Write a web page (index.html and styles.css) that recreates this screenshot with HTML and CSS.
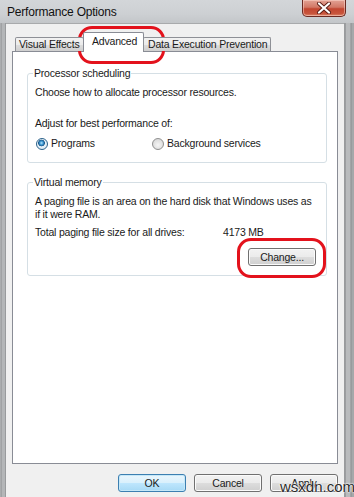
FILE: index.html
```html
<!DOCTYPE html>
<html>
<head>
<meta charset="utf-8">
<link rel="stylesheet" href="styles.css">
</head>
<body>
<div class="window">
  <div class="titlebar">
    <span class="title">Performance Options</span>
    <div class="close">
      <svg width="16" height="12" viewBox="0 0 16 12"><path d="M3 1.5 L13 10.5 M13 1.5 L3 10.5" stroke="#5a1c14" stroke-width="4" stroke-linecap="round"/><path d="M3 1.5 L13 10.5 M13 1.5 L3 10.5" stroke="#ffffff" stroke-width="2.2" stroke-linecap="round"/></svg>
    </div>
  </div>
  <div class="client">
    <div class="tabs">
      <div class="tab tab-ve">Visual Effects</div>
      <div class="tab tab-sel">Advanced</div>
      <div class="tab tab-dep">Data Execution Prevention</div>
    </div>
    <div class="panel">
      <div class="group group-cpu">
        <div class="group-title">Processor scheduling</div>
        <div class="line l-choose">Choose how to allocate processor resources.</div>
        <div class="line l-adjust">Adjust for best performance of:</div>
        <div class="radios">
          <div class="radio-item ri-first"><span class="radio on"></span>Programs</div>
          <div class="radio-item"><span class="radio"></span>Background services</div>
        </div>
      </div>
      <div class="group group-vm">
        <div class="group-title">Virtual memory</div>
        <div class="line l-paging">A paging file is an area on the hard disk that Windows uses as<br>if it were RAM.</div>
        <div class="line l-total"><span class="total-label">Total paging file size for all drives:</span><span>4173 MB</span></div>
        <div class="change-row"><div class="btn btn-change">Change...</div></div>
      </div>
    </div>
    <div class="buttons">
      <div class="btn btn-default">OK</div>
      <div class="btn">Cancel</div>
      <div class="btn">Apply</div>
    </div>
  </div>
  <div class="mark mark-adv"></div>
  <div class="mark mark-change"></div>
  <div class="watermark">wsxdn.com</div>
</div>
</body>
</html>
```

FILE: styles.css
```css
* { box-sizing: border-box; }
html, body { margin: 0; padding: 0; }
body {
  width: 354px;
  height: 497px;
  overflow: hidden;
  font-family: "Liberation Sans", Arial, sans-serif;
  font-size: 10.5px;
  letter-spacing: -0.2px;
  color: #1a1a1a;
}
.window {
  position: relative;
  width: 354px;
  height: 497px;
  display: flex;
  flex-direction: column;
  background: linear-gradient(90deg, #c9cbcd 0px, #8c8e90 1px, #b4b6b8 2px, #b4b6b8 5px, #7d7f81 6px, #b4b6b8 7px, #b4b6b8 344px, #7e8082 345px, #b9bbbd 346px, #b9bbbd 350px, #8c8e90 351px, #a6a8aa 352px);
}
.titlebar {
  height: 23px;
  flex: none;
  display: flex;
  align-items: flex-start;
  justify-content: space-between;
  background: linear-gradient(180deg, #d3d6d9 0%, #cdd0d3 60%, #c3c6c9 100%);
  padding: 0 8px 0 7px;
}
.title {
  font-size: 12px;
  line-height: 14px;
  margin-top: 5px;
  color: #111;
  letter-spacing: -0.2px;
}
.close {
  width: 44px;
  height: 17px;
  border: 1px solid #6b2a22;
  border-top: none;
  border-radius: 0 0 5px 5px;
  background: linear-gradient(180deg, #e3a395 0%, #d27866 45%, #c24630 55%, #c8553c 85%, #dc8a6e 100%);
  box-shadow: inset 0 0 0 1px rgba(255,220,210,0.5);
  display: flex;
  align-items: center;
  justify-content: center;
}
.client {
  flex: 1;
  margin: 0 10px 0 6px;
  background: #f0f0f0;
  border-top: 1px solid #a8aaac;
  padding: 8px 6px 0 6px;
  display: flex;
  flex-direction: column;
}
.tabs {
  display: flex;
  align-items: flex-end;
  padding-left: 3px;
  height: 19px;
  position: relative;
  z-index: 1;
}
.tab {
  height: 14px;
  line-height: 12px;
  border: 1px solid #8e9096;
  border-bottom: none;
  border-radius: 2px 2px 0 0;
  background: linear-gradient(180deg, #f2f2f2 0%, #ebebeb 50%, #dddddd 51%, #cfcfcf 100%);
  white-space: nowrap;
  overflow: hidden;
  color: #1a1a1a;
}
.tab-ve { width: 69px; padding-left: 3px; }
.tab-sel {
  width: 61px;
  height: 20px;
  margin-left: -1px;
  margin-bottom: -1px;
  line-height: 17px;
  background: #ffffff;
  padding-left: 8px;
  border-color: #898c95;
}
.tab-dep { width: 128px; margin-left: -1px; padding-left: 4px; }
.panel {
  height: 413px;
  background: #ffffff;
  border: 1px solid #898c95;
  padding: 21px 10px 0 14px;
  flex: none;
}
.group {
  border: 1px solid #d5dfe5;
  border-radius: 3px;
  padding: 0 10px 12px 7px;
}
.group-vm { margin-top: 19px; padding-bottom: 9px; }
.group-title {
  width: fit-content;
  margin: -7px 0 0 -2px;
  padding: 0 1px;
  background: #fff;
  line-height: 13px;
}
.line { line-height: 13px; white-space: nowrap; }
.l-choose { margin-top: 6px; }
.l-adjust { margin-top: 18px; }
.radios { display: flex; margin-top: 7px; line-height: 13px; }
.radio-item { display: flex; align-items: center; }
.ri-first { width: 116px; }
.radio {
  width: 12px;
  height: 12px;
  border-radius: 50%;
  border: 1px solid #8f8f8f;
  background: radial-gradient(circle at 50% 60%, #f6f6f6 0%, #dcdcdc 70%, #c8c8c8 100%);
  margin: 0 3px 0 1px;
  display: inline-block;
}
.radio.on {
  border-color: #2c628b;
  background: radial-gradient(circle at 45% 40%, #b8e4fa 0%, #3b96d0 22%, #1c5a8c 38%, #e8f2f8 45%, #d6e6f0 100%);
}
.l-paging { margin-top: 6px; }
.l-total { margin-top: 5px; display: flex; }
.total-label { width: 188px; }
.change-row { display: flex; justify-content: flex-end; margin-top: 9px; }
.btn {
  width: 68px;
  height: 18px;
  border: 1px solid #707070;
  border-radius: 3px;
  background: linear-gradient(180deg, #f2f2f2 0%, #ebebeb 50%, #dddddd 51%, #cfcfcf 100%);
  box-shadow: inset 0 0 0 1px #fbfbfb;
  display: flex;
  align-items: center;
  justify-content: center;
  color: #1a1a1a;
  line-height: 13px;
}
.btn-default {
  border-color: #3c7fb1;
  background: linear-gradient(180deg, #eaf6fd 0%, #d9f0fc 50%, #bee6fd 51%, #a7d9f5 100%);
  box-shadow: inset 0 0 0 1px #c6e8f8;
}
.buttons {
  display: flex;
  justify-content: flex-end;
  gap: 8px;
  margin-top: 10px;
}
.mark {
  position: absolute;
  border: 3px solid #e3121c;
  border-radius: 14px;
}
.mark-adv { left: 78px; top: 26px; width: 87px; height: 38px; }
.mark-change { left: 237px; top: 238px; width: 89px; height: 40px; }
.watermark {
  position: absolute;
  left: 280px;
  top: 478px;
  font-family: "Liberation Sans", Arial, sans-serif;
  font-size: 15px;
  letter-spacing: 0;
  color: #2a2a2a;
  text-shadow: 0 0 2px #fff, 0 0 2px #fff, 0 0 1px #fff;
}
```
